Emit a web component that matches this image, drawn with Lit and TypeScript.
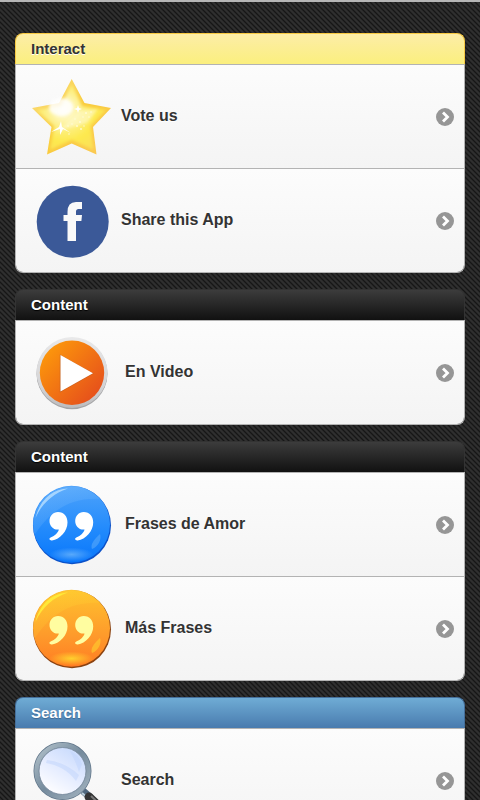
import { LitElement, html, svg, css, type TemplateResult } from "lit";
import { customElement, property } from "lit/decorators.js";

const star = svg`
  <defs>
    <linearGradient id="edge" x1="0" y1="0" x2="1" y2="1">
      <stop offset="0" stop-color="#fbe08a"/><stop offset=".5" stop-color="#f9cb3a"/><stop offset="1" stop-color="#fcc858"/>
    </linearGradient>
    <radialGradient id="body" gradientUnits="userSpaceOnUse" cx="32" cy="30" r="50">
      <stop offset="0" stop-color="#fffef4"/><stop offset=".35" stop-color="#fdf08a"/><stop offset=".65" stop-color="#fde94e"/><stop offset="1" stop-color="#fbdf5a"/>
    </radialGradient>
    <filter id="soft"><feGaussianBlur stdDeviation="1.6"/></filter>
  </defs>
  <g transform="translate(1 2)">
  <path d="M39.700 0 52.500 24 79 29 61 48 64.500 75.500 39.700 64.500 15 75.500 19.500 48 0 29 27 24Z" fill="url(#edge)"/>
  <path d="M39.700 5 50 27 74 31 58.500 47 61.500 71 39.700 61 18 71 22 47 5 31 29 27Z" fill="url(#body)" filter="url(#soft)"/>
  <ellipse cx="29" cy="28" rx="12" ry="9" fill="#fff" opacity=".85" filter="url(#soft)"/>
  <path d="M24 54 46 32 66 30 55 44 32 50Z" fill="#fffbd0" opacity=".6" filter="url(#soft)"/>
  <path d="M29 42 30 48 39 54 31 50 28 56 28 50 19 53 27 48ZM46 26 47 29 50 30 47 31 46 34 45 31 42 30 45 29Z" fill="#fff"/>
  <g fill="#fffde0" opacity=".8">
    <circle cx="43" cy="40" r=".8"/><circle cx="48" cy="43" r="1"/><circle cx="51" cy="38" r=".8"/><circle cx="45" cy="47" r="1"/>
    <circle cx="54" cy="34" r="1"/><circle cx="40" cy="45" r=".8"/><circle cx="52" cy="47" r=".8"/><circle cx="59" cy="33" r=".8"/>
    <circle cx="36" cy="47" r=".8"/><circle cx="49" cy="50" r="1"/><circle cx="37" cy="55" r=".8"/><circle cx="57" cy="38" r=".8"/>
  </g>
  </g>`;

const facebook = svg`
  <circle cx="41.700" cy="40.700" r="36" fill="#3b5998"/>
  <path d="M36.500 60V40H32.500V34H36.500V31Q36.500 21 45 21H51V28H47.500Q45 28 45 30.500V34H51L50.400 40H45V60Z" fill="#f9f9f9"/>`;

const play = svg`
  <defs>
    <linearGradient id="ring" x1="0" y1="0" x2="0" y2="1"><stop offset="0" stop-color="#e9e9ea"/><stop offset=".7" stop-color="#d3d3d5"/><stop offset="1" stop-color="#bcbcbe"/></linearGradient>
    <linearGradient id="orange" x1=".1" y1=".1" x2=".9" y2=".85"><stop offset="0" stop-color="#fd990b"/><stop offset="1" stop-color="#e6501b"/></linearGradient>
  </defs>
  <circle cx="41" cy="40.700" r="35.500" fill="#a4a4a6"/>
  <circle cx="41" cy="39.500" r="35.500" fill="url(#ring)"/>
  <circle cx="41" cy="39.700" r="32.200" fill="url(#orange)"/>
  <path d="M28.800 21.500V59.500L62.500 40.500Z" fill="#a95324" opacity=".6"/>
  <path d="M29.500 22V58.500L62 40.200Z" fill="#fff"/>`;

interface BallTones { top: string; mid: string; low: string; rim: string; shine: string; glow: string; mark: string; }

const quotes = (id: string, t: BallTones) => svg`
  <defs>
    <linearGradient id="${id}-ball" x1="0" y1="0" x2="0" y2="1">
      <stop offset="0" stop-color=${t.top}/><stop offset=".6" stop-color=${t.mid}/><stop offset="1" stop-color=${t.low}/>
    </linearGradient>
    <radialGradient id="${id}-glow"><stop offset="0" stop-color=${t.glow}/><stop offset="1" stop-color=${t.glow} stop-opacity="0"/></radialGradient>
    <linearGradient id="${id}-shine" x1="0" y1="0" x2="1" y2="1"><stop offset="0" stop-color=${t.shine} stop-opacity=".7"/><stop offset="1" stop-color=${t.shine} stop-opacity=".05"/></linearGradient>
    <filter id="${id}-blur"><feGaussianBlur stdDeviation=".7"/></filter>
  </defs>
  <g transform="translate(1 0)">
  <circle cx="40" cy="40.300" r="39" fill=${t.rim}/>
  <circle cx="39.500" cy="39.200" r="38.500" fill="url(#${id}-ball)"/>
  <path d="M2.500 50A38.500 38.500 0 0 1 68 14C38 12 18 26 2.500 50Z" fill="url(#${id}-shine)" opacity=".3"/>
  <path d="M3.500 33C8 14 21 4 36 3.500C22 8 10 18 3.500 33Z" fill=${t.shine} opacity=".8" filter="url(#${id}-blur)"/>
  <ellipse cx="39.500" cy="69.500" rx="22" ry="7" fill="url(#${id}-glow)"/>
  <path d="M68 49C70 54 66 62 60 64C58 60 62 54 68 49Z" fill=${t.glow} opacity=".6" filter="url(#${id}-blur)"/>
  <g fill=${t.mark}>
    <path id="${id}-mark" d="M26 27C32 27 35.500 31.500 35.500 37.500C35.500 46 28 54.500 20 55.500C17.500 55.800 16.500 53.600 18.600 52.600C23 50.600 26.300 47.500 26.800 44.500C21.500 45.300 17.500 41 17.500 36C17.500 31 21 27 26 27Z"/>
    <use href="#${id}-mark" x="25.700"/>
  </g>
  </g>`;

const blueBall = quotes("blue", { top: "#4ea3fb", mid: "#2089fc", low: "#0876fb", rim: "#0b51c8", shine: "#b9e0ff", glow: "#58a9fb", mark: "#ffffff" });
const goldBall = quotes("gold", { top: "#ffc22e", mid: "#fe9a2b", low: "#ff7c22", rim: "#8a4210", shine: "#fff23a", glow: "#ffd02e", mark: "#fffda0" });

const magnifier = svg`
  <defs>
    <linearGradient id="metal" x1="0" y1="0" x2="1" y2="1"><stop offset="0" stop-color="#b4c3cc"/><stop offset=".5" stop-color="#758b9d"/><stop offset="1" stop-color="#a4b4c0"/></linearGradient>
    <linearGradient id="lens" x1=".8" y1=".1" x2=".3" y2=".9"><stop offset="0" stop-color="#cbdcfd"/><stop offset=".5" stop-color="#e3ebff"/><stop offset="1" stop-color="#fafbff"/></linearGradient>
  </defs>
  <g transform="translate(1 1)">
  <path d="M51 49 59 56" stroke="#50687e" stroke-width="7"/>
  <path d="M50 51 57 57" stroke="#bed0dc" stroke-width="2"/>
  <path d="M57 55 78 75" stroke="#343434" stroke-width="9" stroke-linecap="round"/>
  <path d="M59 54 79 73" stroke="#777" stroke-width="2"/>
  <circle cx="30.500" cy="29" r="26" fill="none" stroke="#607589" stroke-width="6"/>
  <circle cx="30.500" cy="29" r="26" fill="none" stroke="url(#metal)" stroke-width="4.500"/>
  <circle cx="30.500" cy="29" r="23.500" fill="url(#lens)" stroke="#8293a5" stroke-width="1"/>
  <path d="M15 18Q33 20 47 33L44 39Q33 24 14 21ZM38 9Q47 13 50 22L47 30Q44 20 38 9Z" fill="#bfd3fb" opacity=".5"/>
  </g>`;

interface Entry { label: string; icon: TemplateResult; spaced?: boolean; }
interface Group { title: string; tone: string; entries: Entry[]; }

const groups: Group[] = [
  { title: "Interact", tone: "yellow", entries: [{ label: "Vote us", icon: star }, { label: "Share this App", icon: facebook }] },
  { title: "Content", tone: "black", entries: [{ label: "En Video", icon: play, spaced: true }] },
  { title: "Content", tone: "black", entries: [{ label: "Frases de Amor", icon: blueBall, spaced: true }, { label: "Más Frases", icon: goldBall, spaced: true }] },
  { title: "Search", tone: "blue", entries: [{ label: "Search", icon: magnifier }] },
];

@customElement("list-group")
class ListGroup extends LitElement {
  @property({ attribute: false }) group!: Group;

  static styles = css`
    :host { display: block; }
    .title {
      box-sizing: border-box; height: 31px; margin: 0; padding: 0 15px;
      border: 1px solid; border-bottom: 0; border-radius: 8px 8px 0 0;
      font-size: 15px; line-height: 30px; font-weight: bold;
    }
    .yellow { color: #333; border-color: #f7c942; background: linear-gradient(#fceda7, #fbef7e); text-shadow: 0 1px 0 #fff; }
    .black { color: #fff; border-color: #333; background: linear-gradient(#3c3c3c, #111); text-shadow: 0 1px 1px #000; }
    .blue { color: #fff; border-color: #456f9a; background: linear-gradient(#6facd5, #497bae); text-shadow: 0 1px 1px #3e6790; }
    .list {
      list-style: none; margin: 0; padding: 0; overflow: hidden;
      border: 1px solid #b3b3b3; border-top: 0; border-radius: 0 0 8px 8px;
    }
    .row {
      display: flex; align-items: center; box-sizing: border-box; height: 104px; padding: 0 10px 0 15px;
      border-top: 1px solid #b3b3b3; background: linear-gradient(#fcfcfc, #f4f4f4);
      color: #333; font-size: 16px; line-height: 20px; font-weight: bold; text-decoration: none; text-shadow: 0 1px 0 #fff;
    }
    .icon { width: 80px; height: 80px; flex: none; overflow: visible; }
    .label { flex: 1; margin-left: 10px; padding-bottom: 2px; }
    .spaced { margin-left: 14px; }
    .arrow { width: 18px; height: 18px; flex: none; }
  `;

  render() {
    const { title, tone, entries } = this.group;
    return html`
      <h2 class="title ${tone}">${title}</h2>
      <ul class="list">
        ${entries.map((e) => html`
          <li><a class="row" href="#">
            <svg class="icon" viewBox="0 0 80 80" aria-hidden="true">${e.icon}</svg>
            <span class="label ${e.spaced ? "spaced" : ""}">${e.label}</span>
            <svg class="arrow" viewBox="0 0 18 18" aria-hidden="true">
              <circle cx="9" cy="9" r="9" fill="#969696"/>
              <path d="M7 4.500 11.500 9 7 13.500" fill="none" stroke="#fff" stroke-width="2.800"/>
            </svg>
          </a></li>`)}
      </ul>`;
  }
}

@customElement("app-root")
class AppRoot extends LitElement {
  static styles = css`
    :host {
      display: block; box-sizing: border-box; height: 100vh; overflow: hidden;
      border-top: 2px solid #b5b5b5;
      background: linear-gradient(45deg, #161616, #242424 10%, #2f2f2f 20% 30%, #242424 40%, #161616 50%, #242424 60%, #2f2f2f 70% 80%, #242424 90%, #161616) 0 0 / 5px 5px;
      font-family: "Liberation Sans", Arial, Helvetica, sans-serif;
    }
    .page { display: flex; flex-direction: column; gap: 16px; padding: 31px 15px; }
  `;

  render() {
    return html`<main class="page">${groups.map((g) => html`<list-group .group=${g}></list-group>`)}</main>`;
  }
}

declare global {
  interface HTMLElementTagNameMap { "app-root": AppRoot; "list-group": ListGroup; }
}
